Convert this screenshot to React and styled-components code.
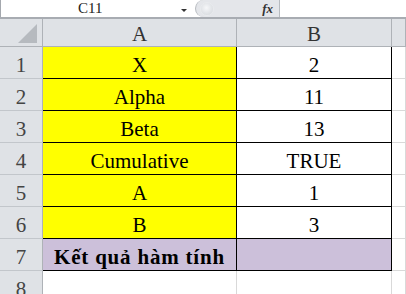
import React from 'react';
import styled, { createGlobalStyle } from 'styled-components';

const Global = createGlobalStyle`
  html, body { margin: 0; padding: 0; background: #fff; }
  body { width: 406px; height: 294px; overflow: hidden; font-family: "Liberation Serif", "Times New Roman", serif; }
`;

const Page = styled.div`
  width: 406px;
  height: 294px;
  overflow: hidden;
  display: flex;
  flex-direction: column;
`;

const Toolbar = styled.div`
  height: 20px;
  display: flex;
  align-items: stretch;
  border-left: 1px solid #a4a8ae;
  box-sizing: border-box;
`;

const NameBox = styled.div`
  width: 194px;
  display: flex;
  align-items: center;
  position: relative;
  font-size: 15px;
  color: #222;
  padding-left: 77px;
  box-sizing: border-box;
`;

const Arrow = styled.span`
  position: absolute;
  left: 180px;
  top: 9px;
  width: 0;
  height: 0;
  border-left: 3px solid transparent;
  border-right: 3px solid transparent;
  border-top: 3px solid #333;
`;

const FormulaPanel = styled.div`
  width: 85px;
  background: #e4e6ea;
  border-right: 1px solid #b7bbc0;
  border-top-left-radius: 10px;
  border-bottom-left-radius: 10px;
  border-left: 1px solid #b7bbc0;
  display: flex;
  align-items: center;
  justify-content: space-between;
  padding: 0 6px 0 4px;
  box-sizing: border-box;
`;

const Knob = styled.span`
  width: 12px;
  height: 12px;
  border-radius: 50%;
  background: radial-gradient(circle at 45% 40%, #f6f7f9 0%, #dcdfe3 70%, #c9ccd1 100%);
  border: 1px solid #e9ebee;
`;

const Fx = styled.span`
  font-style: italic;
  font-weight: bold;
  font-size: 13px;
  color: #333;
`;

const Separator = styled.div`
  height: 4px;
  border-top: 1px solid #a8acb2;
  border-bottom: 1px solid #a8acb2;
  background: #fff;
  box-sizing: border-box;
`;

const Row = styled.div`
  display: grid;
  grid-template-columns: 43px 194px 155px 1fr;
  height: ${p => p.$h}px;
  flex-shrink: 0;
`;

const Head = styled.div`
  background: #dfe2e6;
  border-right: 1px solid #aeb2b7;
  border-bottom: 1px solid #aeb2b7;
  display: flex;
  align-items: flex-end;
  justify-content: center;
  font-size: 21px;
  line-height: 24px;
  padding-bottom: 0;
  color: #333;
  position: relative;
`;

const Corner = styled.span`
  position: absolute;
  right: 5px;
  bottom: 3px;
  width: 0;
  height: 0;
  border-left: 19px solid transparent;
  border-bottom: 19px solid #b6babf;
`;

const RowNum = styled.div`
  background: #dfe2e6;
  border-right: 1px solid #aeb2b7;
  border-bottom: 1px solid #c2c6cb;
  display: flex;
  align-items: flex-end;
  justify-content: center;
  font-size: 21px;
  line-height: 24px;
  padding-bottom: 1px;
  color: #444;
`;

const Cell = styled.div`
  background: ${p => p.$bg || '#fff'};
  border-right: 1px solid ${p => (p.$line ? '#000' : '#d9d9d9')};
  border-bottom: 1px solid ${p => (p.$line ? '#000' : '#d9d9d9')};
  display: flex;
  align-items: flex-end;
  justify-content: center;
  font-size: 21px;
  line-height: 24px;
  padding-bottom: 1px;
  font-weight: ${p => (p.$bold ? 'bold' : 'normal')};
  letter-spacing: ${p => (p.$bold ? '0.8px' : 'normal')};
  color: #000;
  white-space: nowrap;
`;

const rows = [
  ['X', '2'],
  ['Alpha', '11'],
  ['Beta', '13'],
  ['Cumulative', 'TRUE'],
  ['A', '1'],
  ['B', '3'],
];

export default function App() {
  return (
    <Page>
      <Global />
      <Toolbar>
        <NameBox>
          C11
          <Arrow />
        </NameBox>
        <FormulaPanel>
          <Knob />
          <Fx>fx</Fx>
        </FormulaPanel>
      </Toolbar>
      <Separator />
      <Row $h={28}>
        <Head><Corner /></Head>
        <Head>A</Head>
        <Head>B</Head>
        <Head />
      </Row>
      {rows.map(([a, b], i) => (
        <Row $h={32} key={i}>
          <RowNum>{i + 1}</RowNum>
          <Cell $bg="#ffff00" $line>{a}</Cell>
          <Cell $line>{b}</Cell>
          <Cell />
        </Row>
      ))}
      <Row $h={32}>
        <RowNum>7</RowNum>
        <Cell $bg="#ccc0da" $line $bold>Kết quả hàm tính</Cell>
        <Cell $bg="#ccc0da" $line />
        <Cell />
      </Row>
      <Row $h={32}>
        <RowNum>8</RowNum>
        <Cell />
        <Cell />
        <Cell />
      </Row>
    </Page>
  );
}
